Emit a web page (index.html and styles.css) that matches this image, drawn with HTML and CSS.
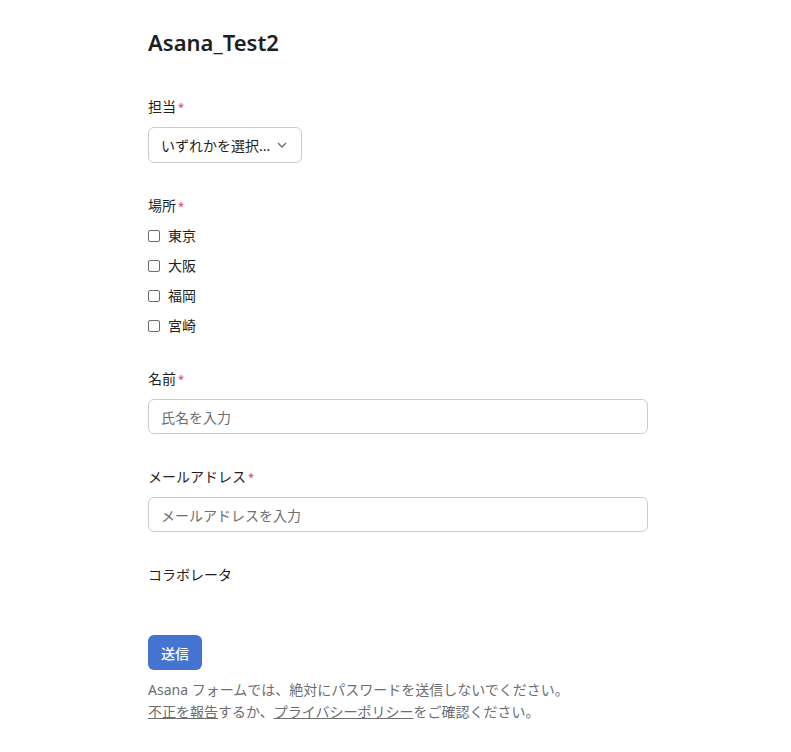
FILE: index.html
```html
<!DOCTYPE html>
<html lang="ja">
<head>
<meta charset="utf-8">
<title>Asana_Test2</title>
<link rel="stylesheet" href="styles.css">
</head>
<body>
<main class="form">
  <h1 class="title">Asana_Test2</h1>

  <section class="field">
    <div class="label">担当<span class="req">*</span></div>
    <div class="select">
      <span>いずれかを選択...</span>
      <svg class="chev" width="10" height="6" viewBox="0 0 10 6"><path d="M1 1l4 4 4-4" fill="none" stroke="#6d6e6f" stroke-width="1.4"/></svg>
    </div>
  </section>

  <section class="field">
    <div class="label">場所<span class="req">*</span></div>
    <div class="checks">
      <label class="check"><span class="box"></span>東京</label>
      <label class="check"><span class="box"></span>大阪</label>
      <label class="check"><span class="box"></span>福岡</label>
      <label class="check"><span class="box"></span>宮崎</label>
    </div>
  </section>

  <section class="field">
    <div class="label">名前<span class="req">*</span></div>
    <div class="input">氏名を入力</div>
  </section>

  <section class="field">
    <div class="label">メールアドレス<span class="req">*</span></div>
    <div class="input">メールアドレスを入力</div>
  </section>

  <section class="field field-last">
    <div class="label">コラボレータ</div>
  </section>

  <button class="submit">送信</button>

  <p class="note">Asana フォームでは、絶対にパスワードを送信しないでください。<br><a href="#">不正を報告</a>するか、<a href="#">プライバシーポリシー</a>をご確認ください。</p>
</main>
</body>
</html>
```

FILE: styles.css
```css
* { box-sizing: border-box; }
body {
  margin: 0;
  background: #fff;
  font-family: "Noto Sans", "Noto Sans CJK JP", sans-serif;
  color: #1e1f21;
  font-size: 14px;
}
.form {
  width: 500px;
  margin-left: 148px;
  padding-top: 28px;
}
.title {
  margin: 0 0 41px;
  font-size: 22px;
  line-height: 28px;
  font-weight: 600;
  color: #1e1f21;
}
.field {
  margin-bottom: 33px;
}
.label {
  font-size: 14px;
  line-height: 20px;
  margin-bottom: 10px;
}
.req {
  color: #e8384f;
  font-size: 11px;
  margin-left: 2px;
  vertical-align: top;
}
.select {
  display: inline-flex;
  align-items: center;
  justify-content: space-between;
  width: 154px;
  height: 36px;
  padding: 0 14px 0 12px;
  border: 1px solid #cfcbcb;
  border-radius: 6px;
  color: #1e1f21;
}
.checks {
  display: flex;
  flex-direction: column;
  gap: 10px;
}
.check {
  display: flex;
  align-items: center;
  height: 20px;
  line-height: 20px;
}
.box {
  width: 12px;
  height: 12px;
  border: 1px solid #6d6e6f;
  border-radius: 2px;
  margin-right: 8px;
}
.input {
  height: 35px;
  border: 1px solid #cfcbcb;
  border-radius: 6px;
  padding: 0 12px;
  display: flex;
  align-items: center;
  color: #6d6e6f;
}
.field-last { margin-bottom: 50px; }
.field-last .label { margin-bottom: 0; }
.submit {
  display: block;
  height: 35px;
  padding: 0 13px;
  border: none;
  border-radius: 6px;
  background: #4573d2;
  color: #fff;
  font-family: inherit;
  font-size: 14px;
  font-weight: 500;
}
.note {
  margin: 9px 0 0;
  font-size: 14px;
  line-height: 22px;
  color: #6d6e6f;
}
.note a {
  color: #6d6e6f;
  text-decoration: underline;
}
```
